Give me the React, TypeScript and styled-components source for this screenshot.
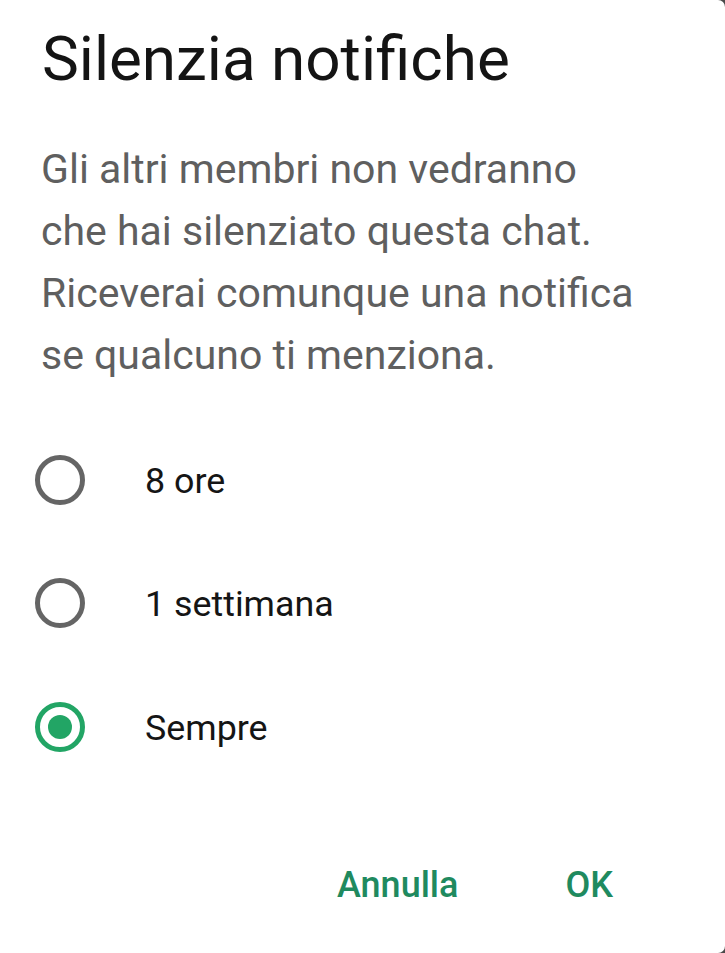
import React, { useState } from "react";
import styled, { createGlobalStyle } from "styled-components";

const Global = createGlobalStyle`
  html, body { margin: 0; padding: 0; height: 100%; background: #4a4a4a; }
  #root { height: 100%; }
  * { box-sizing: border-box; }
`;

const Dialog = styled.div`
  height: 953px;
  width: 725px;
  background: #ffffff;
  border-top-right-radius: 7px;
  border-bottom-right-radius: 7px;
  display: flex;
  flex-direction: column;
  font-family: Roboto, "Noto Sans", Arial, sans-serif;
  padding-top: 23px;
`;

const Title = styled.h1`
  margin: 0 0 0 42px;
  font-size: 62px;
  line-height: 72px;
  font-weight: 400;
  color: #141414;
`;

const Body = styled.p`
  margin: 43px 20px 0 41px;
  font-size: 41px;
  line-height: 62px;
  color: #5f5f5f;
`;

const Options = styled.div`
  margin-top: 32px;
  display: flex;
  flex-direction: column;
`;

const Row = styled.label`
  height: 123.5px;
  display: flex;
  align-items: center;
  padding-left: 35px;
  gap: 60px;
  cursor: pointer;
`;

const Radio = styled.span<{ $checked: boolean }>`
  width: 50px;
  height: 50px;
  border-radius: 50%;
  border: 5px solid ${(p) => (p.$checked ? "#22a565" : "#656565")};
  display: flex;
  align-items: center;
  justify-content: center;
  flex-shrink: 0;
  &::after {
    content: "";
    width: 24px;
    height: 24px;
    border-radius: 50%;
    background: #22a565;
    display: ${(p) => (p.$checked ? "block" : "none")};
  }
`;

const OptionText = styled.span`
  font-size: 35.8px;
  color: #151515;
  line-height: 1;
  padding-top: 4px;
`;

const Actions = styled.div`
  margin-top: 75px;
  display: flex;
  justify-content: flex-end;
  gap: 107px;
  padding-right: 112px;
`;

const Action = styled.button`
  border: none;
  background: none;
  padding: 0;
  font-family: Roboto, "Noto Sans", Arial, sans-serif;
  font-size: 36px;
  line-height: 43px;
  font-weight: 500;
  color: #1f8a5f;
  cursor: pointer;
`;

const options = ["8 ore", "1 settimana", "Sempre"];

export default function App() {
  const [sel, setSel] = useState(2);
  return (
    <>
      <Global />
      <Dialog>
        <Title>Silenzia notifiche</Title>
        <Body>
          Gli altri membri non vedranno
          <br />
          che hai silenziato questa chat.
          <br />
          Riceverai comunque una notifica
          <br />
          se qualcuno ti menziona.
        </Body>
        <Options>
          {options.map((o, i) => (
            <Row key={o} onClick={() => setSel(i)}>
              <Radio $checked={sel === i} />
              <OptionText>{o}</OptionText>
            </Row>
          ))}
        </Options>
        <Actions>
          <Action>Annulla</Action>
          <Action>OK</Action>
        </Actions>
      </Dialog>
    </>
  );
}
